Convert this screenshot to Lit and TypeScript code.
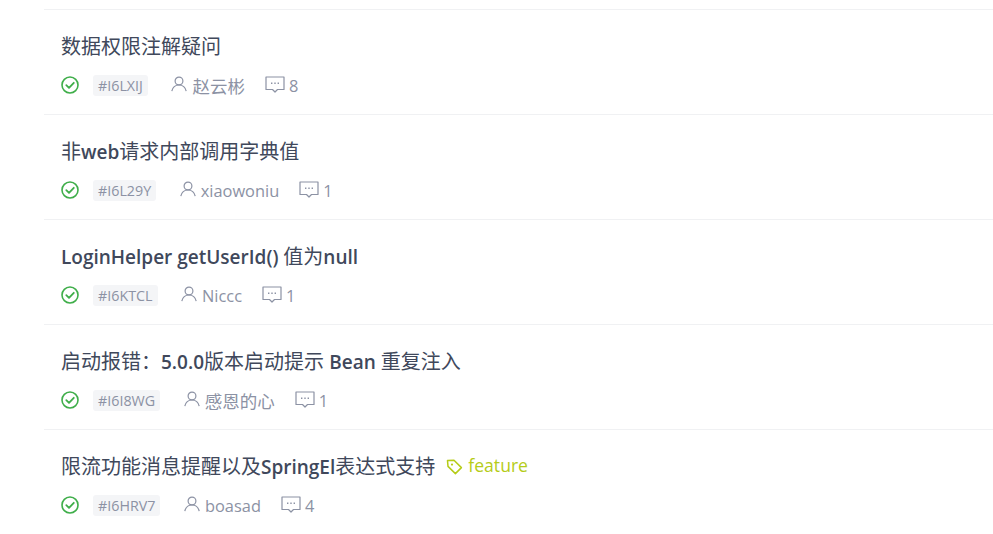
import { LitElement, html, css } from "lit";
import { customElement } from "lit/decorators.js";

type Part = string | { b: string };
interface Issue { title: Part[]; id: string; user: string; count: number; tag?: string }

const issues: Issue[] = [
  { title: ["数据权限注解疑问"], id: "#I6LXIJ", user: "赵云彬", count: 8 },
  { title: ["非", { b: "web" }, "请求内部调用字典值"], id: "#I6L29Y", user: "xiaowoniu", count: 1 },
  { title: [{ b: "LoginHelper getUserId() " }, "值为", { b: "null" }], id: "#I6KTCL", user: "Niccc", count: 1 },
  { title: ["启动报错：", { b: "5.0.0" }, "版本启动提示 ", { b: "Bean " }, "重复注入"], id: "#I6I8WG", user: "感恩的心", count: 1 },
  { title: ["限流功能消息提醒以及", { b: "SpringEl" }, "表达式支持"], id: "#I6HRV7", user: "boasad", count: 4, tag: "feature" },
];

@customElement("app-root")
export class AppRoot extends LitElement {
  static styles = css`
    :host { display: block; width: 993px; height: 534px; overflow: hidden; background: #fff; font-family: "Open Sans", "Noto Sans CJK SC", sans-serif; }
    .list { margin-left: 44px; padding-top: 9px; }
    .row { box-sizing: border-box; height: 105px; border-top: 1px solid #f0f1f3; padding: 24px 0 0 17px; }
    .title { display: flex; align-items: center; height: 26px; font-size: 20px; line-height: 26px; color: #40485b; white-space: pre; }
    .title b { font-weight: 600; font-size: 19px; }
    .tag { display: inline-flex; align-items: center; margin-left: 11px; margin-bottom: 5px; color: #b5cc18; font-size: 17.6px; }
    .tag svg { width: 17px; height: 17px; margin-right: 5px; margin-top: 4px; }
    .meta { display: flex; align-items: center; height: 24px; margin-top: 13px; font-size: 16.4px; color: #8c92a4; }
    .check { width: 18px; height: 18px; margin-right: 14px; margin-top: -1px; }
    .id { font-size: 14.3px; line-height: 21px; height: 21px; padding: 0 5px; background: #f4f5f7; border-radius: 3px; color: #8c92a4; margin-right: 22.5px; }
    .user { display: flex; align-items: center; margin-right: 20px; }
    .user svg { width: 18px; height: 18px; margin-right: 4px; margin-top: -3px; }
    .cjk { font-size: 17.5px; }
    .count { display: flex; align-items: center; }
    .count svg { width: 20px; height: 20px; margin-right: 4px; margin-top: -2px; }
  `;
  render() {
    return html`<div class="list">
      ${issues.map((i) => html`<div class="row">
        <div class="title"><span>${i.title.map((p) => (typeof p === "string" ? p : html`<b>${p.b}</b>`))}</span>
          ${i.tag ? html`<span class="tag"><svg viewBox="0 0 17 17" fill="none" stroke="#b5cc18" stroke-width="1.5" stroke-linejoin="round"><path d="M1.5 2.6 2 8.4 9.4 15.6 15.4 9.6 8 2.2Z"/><circle cx="6" cy="6.6" r="1.1" fill="#b5cc18" stroke="none"/></svg>${i.tag}</span>` : ""}
        </div>
        <div class="meta">
          <svg class="check" viewBox="0 0 18 18" fill="none" stroke="#3fae4a" stroke-width="1.6"><circle cx="9" cy="9" r="8"/><path d="M5.3 9.2 8 11.8 12.8 6.8" stroke-linecap="round" stroke-linejoin="round" stroke-width="1.8"/></svg>
          <span class="id">${i.id}</span>
          <span class="user"><svg viewBox="0 0 18 18" fill="none" stroke="#8c92a4" stroke-width="1.2"><circle cx="9" cy="6" r="3.9"/><path d="M1.8 16.2C2.6 12.4 5.4 10 9 10s6.4 2.4 7.2 6.2"/></svg><span class=${/[^\x00-\x7f]/.test(i.user) ? "cjk" : ""}>${i.user}</span></span>
          <span class="count"><svg viewBox="0 0 20 20" fill="none" stroke="#8c92a4" stroke-width="1.2" stroke-linejoin="round"><path d="M1 3H19V15.5H12.5L10 18 7.5 15.5H1Z"/><path d="M6 9.2h1.4M9.3 9.2h1.4M12.6 9.2H14" stroke-width="1.5"/></svg>${i.count}</span>
        </div>
      </div>`)}
    </div>`;
  }
}
